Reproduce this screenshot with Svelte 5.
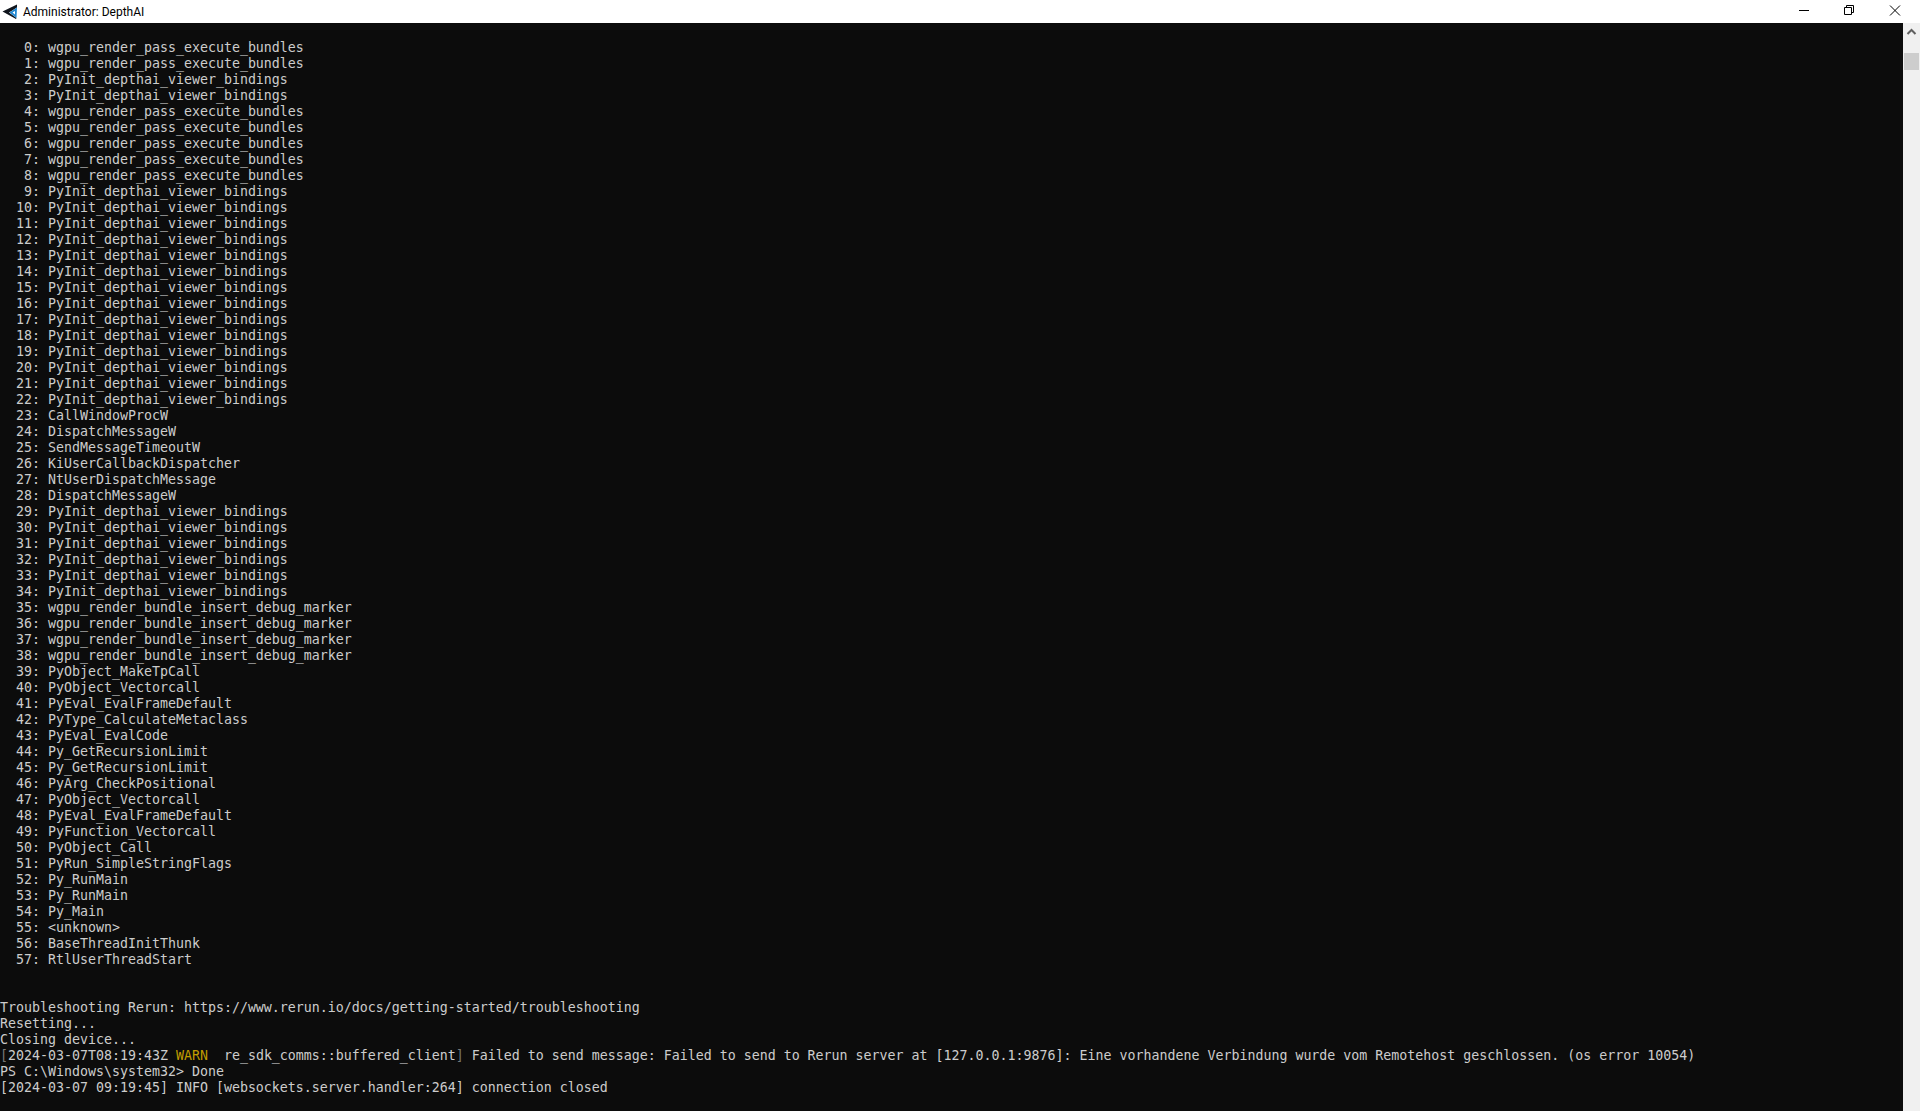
<script>
  const W = 'wgpu_render_pass_execute_bundles';
  const P = 'PyInit_depthai_viewer_bindings';
  const D = 'wgpu_render_bundle_insert_debug_marker';
  const frames = [
    W, W, P, P, W, W, W, W, W, ...Array(14).fill(P),
    'CallWindowProcW', 'DispatchMessageW', 'SendMessageTimeoutW', 'KiUserCallbackDispatcher',
    'NtUserDispatchMessage', 'DispatchMessageW', ...Array(6).fill(P), D, D, D, D,
    'PyObject_MakeTpCall', 'PyObject_Vectorcall', 'PyEval_EvalFrameDefault', 'PyType_CalculateMetaclass',
    'PyEval_EvalCode', 'Py_GetRecursionLimit', 'Py_GetRecursionLimit', 'PyArg_CheckPositional',
    'PyObject_Vectorcall', 'PyEval_EvalFrameDefault', 'PyFunction_Vectorcall', 'PyObject_Call',
    'PyRun_SimpleStringFlags', 'Py_RunMain', 'Py_RunMain', 'Py_Main', '<unknown>',
    'BaseThreadInitThunk', 'RtlUserThreadStart'
  ];
  const rows = frames.map((f, i) => `${String(i).padStart(4, ' ')}: ${f}`);
  const gap = '  ';
</script>

<div class="window">
  <header class="titlebar">
    <svg class="logo" viewBox="0 0 16 16" aria-hidden="true">
      <path d="M0.5 7.5 L15 0.5 L15 3.5 L7 8.5 L14.5 14 L14 15 Z" fill="#10151c" />
      <path d="M7.5 8.5 L15 3.5 L14.5 14 Z" fill="#1f86d0" />
      <path d="M10.5 8.5 L13 7 L13 10.5 Z" fill="#fff" />
    </svg>
    <span class="title">Administrator: DepthAI</span>
    <div class="controls">
      <svg viewBox="0 0 46 23" aria-hidden="true"><path d="M19 10.5h10" stroke="#000" fill="none" /></svg>
      <svg viewBox="0 0 46 23" aria-hidden="true"><path d="M18.5 7.5h7v7h-7zM20.5 7.5v-2h7v7h-2" stroke="#000" fill="none" /></svg>
      <svg viewBox="0 0 46 23" aria-hidden="true"><path d="M18 5.5l10 10M28 5.5l-10 10" stroke="#000" fill="none" /></svg>
    </div>
  </header>
  <div class="body">
    <main class="console">
      <div class="line"></div>
      {#each rows as r}
        <div class="line">{r}</div>
      {/each}
      <div class="line"></div>
      <div class="line"></div>
      <div class="line">Troubleshooting Rerun: https://www.rerun.io/docs/getting-started/troubleshooting</div>
      <div class="line">Resetting...</div>
      <div class="line">Closing device...</div>
      <div class="line"><span class="dim">[</span>2024-03-07T08:19:43Z <span class="warn">WARN</span>{gap}re_sdk_comms::buffered_client<span class="dim">]</span> Failed to send message: Failed to send to Rerun server at [127.0.0.1:9876]: Eine vorhandene Verbindung wurde vom Remotehost geschlossen. (os error 10054)</div>
      <div class="line">PS C:\Windows\system32&gt; Done</div>
      <div class="line">[2024-03-07 09:19:45] INFO [websockets.server.handler:264] connection closed</div>
    </main>
    <aside class="scrollbar">
      <svg class="arrow" viewBox="0 0 17 17" aria-hidden="true"><path d="M4.5 11 L8.5 7 L12.5 11" stroke="#606060" stroke-width="2" fill="none" /></svg>
      <div class="thumb"></div>
    </aside>
  </div>
</div>

<style>
  :global(body) { margin: 0; background: #0c0c0c; overflow: hidden; }
  .window { width: 1920px; height: 1111px; display: flex; flex-direction: column; }
  .titlebar {
    height: 23px; flex: none; background: #fff; display: flex; align-items: center;
    padding: 0 2px;
  }
  .logo { width: 16px; height: 16px; flex: none; }
  .title { font: 12px Roboto, sans-serif; color: #000; margin-left: 5px; }
  .controls { margin-left: auto; display: flex; }
  .controls svg { width: 46px; height: 23px; display: block; }
  .body { flex: 1; display: flex; min-height: 0; }
  .console {
    flex: 1; background: #0c0c0c; color: #cccccc; overflow: hidden; padding-top: 1px;
    font: 13.29px/16px "DejaVu Sans Mono", monospace;
  }
  .line { height: 16px; white-space: pre; }
  .dim { color: #767676; }
  .warn { color: #c19c00; }
  .scrollbar { width: 17px; flex: none; background: #f0f0f0; display: flex; flex-direction: column; align-items: center; }
  .arrow { width: 17px; height: 17px; display: block; }
  .thumb { width: 15px; height: 17px; margin-top: 13px; background: #cdcdcd; }
</style>
